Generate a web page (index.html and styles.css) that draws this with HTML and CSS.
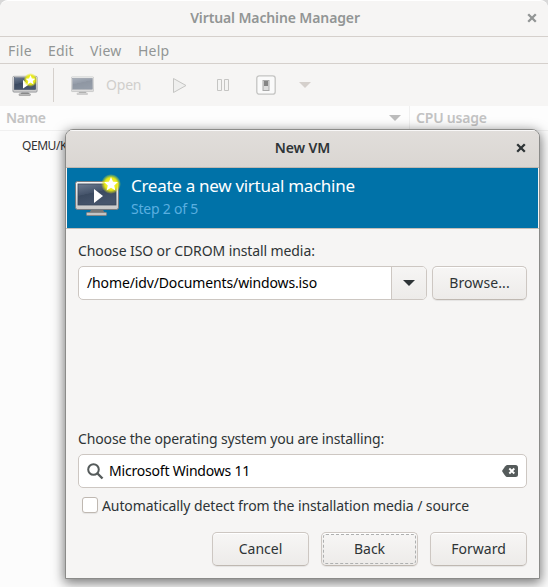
FILE: index.html
```html
<!DOCTYPE html>
<html lang="en">
<head>
<meta charset="utf-8">
<title>Virtual Machine Manager</title>
<link rel="stylesheet" href="styles.css">
</head>
<body>
<svg width="0" height="0" class="defs">
  <defs>
    <linearGradient id="screen" x1="0" y1="0" x2="0.4" y2="1"><stop offset="0" stop-color="#6d7b90"/><stop offset=".48" stop-color="#45546b"/><stop offset=".5" stop-color="#3b4a60"/><stop offset="1" stop-color="#46556c"/></linearGradient>
    <linearGradient id="bezel" x1="0" y1="0" x2="0" y2="1"><stop offset="0" stop-color="#f5f5f5"/><stop offset="1" stop-color="#c8c8c8"/></linearGradient>
    <radialGradient id="glow"><stop offset="0" stop-color="#fffd60"/><stop offset=".62" stop-color="#e8ea10"/><stop offset="1" stop-color="#e8ea10" stop-opacity="0"/></radialGradient>
    <symbol id="monitor" viewBox="0 0 46 42">
      <path d="M17 35h12l2 3H15z" fill="#777"/>
      <rect x="12.500" y="37.500" width="20" height="3" rx=".8" fill="#c4c4c4" stroke="#858585"/>
      <rect x="1.500" y="6.500" width="43" height="28" rx="2" fill="url(#bezel)" stroke="#777b80"/>
      <rect x="4" y="9" width="38" height="21" fill="url(#screen)" stroke="#39465a" stroke-width=".8"/>
    </symbol>
    <symbol id="star" viewBox="0 0 20 20">
      <circle cx="10" cy="10" r="10" fill="url(#glow)"/>
      <path d="M10 3l2 4.700 5 .4-3.800 3.300 1.200 5-4.400-2.700-4.400 2.700 1.200-5L3 8.100l5-.4z" fill="#fff"/>
    </symbol>
  </defs>
</svg>
<main class="window">
  <header class="titlebar"><span class="title">Virtual Machine Manager</span>
    <svg class="close" width="10" height="10" viewBox="0 0 10 10"><path d="M1.200 1.200l7.600 7.600M8.800 1.200L1.200 8.800"/></svg>
  </header>
  <nav class="menubar"><span class="m-file">File</span><span class="m-edit">Edit</span><span class="m-view">View</span><span>Help</span></nav>
  <div class="toolbar">
    <svg class="t-new" width="26" height="24" viewBox="0 0 26 24">
      <use href="#monitor" x="0" y="-1" width="26" height="25"/>
      <path d="M11 7l6 4.500-6 4z" fill="#fff"/>
      <use href="#star" x="11" y="0" width="15" height="14"/>
    </svg>
    <i class="sep"></i>
    <svg class="t-open" width="24" height="22" viewBox="0 0 24 22"><use href="#monitor" x="-.5" y="-1" width="24" height="23"/></svg>
    <span class="open">Open</span>
    <svg class="t-play" width="16" height="17" viewBox="0 0 16 17"><path d="M1.500 1.500v14L14 8.500z" fill="#efefee" stroke="#c5c5c3"/></svg>
    <svg class="t-pause" width="14" height="14" viewBox="0 0 14 14"><path d="M1.500 1.500h4v11h-4zM8.500 1.500h4v11h-4z" fill="#f4f4f3" stroke="#c5c5c3"/></svg>
    <svg class="t-power" width="20" height="20" viewBox="0 0 20 20"><rect x=".8" y=".8" width="18.400" height="18.400" rx="2.500" fill="#fafafa" stroke="#c4c4c2" stroke-width="1.300"/><rect x="7" y="5.500" width="6" height="10" fill="#ddd" stroke="#aaa"/><path d="M8 6h4v5H8z" fill="#858585"/></svg>
    <i class="tri t-tri"></i>
  </div>
  <div class="columns"><div class="c-name"><span class="name">Name</span><i class="tri"></i></div><div class="c-cpu"><span class="cpu">CPU usage</span></div></div>
  <div class="list"><span>QEMU/KVM</span></div>
</main>

<section class="dialog">
  <header class="d-title"><span class="newvm">New VM</span>
    <svg class="close" width="10" height="10" viewBox="0 0 10 10"><path d="M1.200 1.200l7.600 7.600M8.800 1.200L1.200 8.800"/></svg>
  </header>
  <div class="banner">
    <svg width="48" height="44" viewBox="0 0 48 44">
      <use href="#monitor" x="-1" y="0" width="46" height="42"/>
      <path d="M19 14v14l9-7z" fill="#fff"/>
      <use href="#star" x="26" y="-1" width="20" height="20"/>
    </svg>
    <div class="b-text"><div class="create">Create a new virtual machine</div><div class="step">Step 2 of 5</div></div>
  </div>
  <div class="body">
    <label class="l-media">Choose ISO or CDROM install media:</label>
    <div class="row">
      <div class="combo"><div class="value"><span class="path">/home/idv/Documents/windows.iso</span></div><div class="drop"><i class="tri"></i></div></div>
      <button class="btn browse"><span>Browse...</span></button>
    </div>
    <label class="l-os">Choose the operating system you are installing:</label>
    <div class="search">
      <svg width="16" height="16" viewBox="0 0 16 16" fill="none" stroke="#555b5b" stroke-width="2"><circle cx="6.500" cy="6.500" r="5.300"/><path d="M10.500 10.500l5 5" stroke-width="2.400"/></svg>
      <span class="os">Microsoft Windows 11</span>
      <svg width="16" height="12" viewBox="0 0 16 12"><path d="M5 0h8.500Q16 0 16 2.500v7Q16 12 13.500 12H5Q3.500 12 0 6 3.500 0 5 0z" fill="#555b5b"/><path d="M7.300 3.500l5 5M12.300 3.500l-5 5" stroke="#fff" stroke-width="1.900"/></svg>
    </div>
    <div class="check"><i></i><span class="auto">Automatically detect from the installation media / source</span></div>
    <div class="actions"><button class="btn cancel"><span>Cancel</span></button><button class="btn back"><span>Back</span></button><button class="btn forward"><span>Forward</span></button></div>
  </div>
</section>
</body>
</html>
```
FILE: styles.css
```css
* { box-sizing: border-box; }
body { margin: 0; width: 548px; height: 587px; overflow: hidden; background: #d8d8d8; font: 14px/20px "Noto Sans", sans-serif; color: #2e3436; white-space: nowrap; }
svg { display: block; flex: none; overflow: visible; }
.defs { position: absolute; }
.window { height: 587px; display: flex; flex-direction: column; background: #fcfcfc; border-radius: 8px 8px 0 0; overflow: hidden; border-top: 1px solid #fff; }
.titlebar { height: 36px; flex: none; display: grid; place-items: center; position: relative; padding: 0 0 2px 2px; background: #f6f5f4; border-bottom: 1px solid #d5d0cc; color: #929595; font-weight: 600; }
.title { letter-spacing: -.12px; }
.close { position: absolute; right: 11px; top: 12px; stroke: #929595; stroke-width: 2.300; }
.menubar { height: 27px; flex: none; display: flex; align-items: center; padding: 1px 0 0 8px; background: #f6f5f4; border-bottom: 1px solid #d5d0cc; color: #929595; letter-spacing: .2px; }
.m-file { width: 40px; letter-spacing: .4px; }
.m-edit { width: 42px; }
.m-view { width: 48px; }
.toolbar { height: 42px; flex: none; display: flex; align-items: center; padding-left: 12px; background: #f6f5f4; }
.sep { width: 1px; height: 34px; background: #d5d0cc; margin: 0 17px 0 15px; }
.t-open { opacity: .55; margin-right: 11px; }
.open { width: 66px; color: #d0cfcc; letter-spacing: -.2px; }
.t-play { margin-right: 28px; }
.t-pause { margin-right: 26px; }
.t-power { margin-right: 23px; }
.tri { width: 12px; height: 6px; background: currentColor; clip-path: polygon(0 0, 100% 0, 50% 100%); flex: none; }
.t-tri { color: #d5d0cc; }
.columns { height: 25px; flex: none; display: flex; color: #c3c3c3; font-weight: 600; border-bottom: 1px solid #f0f0f0; background: #fdfdfd; }
.c-name { width: 410px; display: flex; align-items: center; justify-content: space-between; padding: 0 8px 0 6px; border-right: 1px solid #f0f0f0; }
.name { letter-spacing: -.3px; }
.cpu { letter-spacing: -.2px; }
.c-name .tri { color: #bcbcbc; }
.c-cpu { padding: 2px 6px; }
.list { padding: 5px 22px; font-size: 12px; letter-spacing: -.45px; color: #333; }
.dialog { position: absolute; left: 65px; top: 129px; width: 475px; height: 450px; border: 1px solid #8b8b89; border-radius: 8px 8px 0 0; background: #f6f5f4; box-shadow: 0 3px 12px 1px rgba(0,0,0,.52); overflow: hidden; }
.d-title { height: 38px; display: grid; place-items: center; position: relative; padding-bottom: 2px; background: linear-gradient(#e1dedb, #dad6d2); border-bottom: 1px solid #bfb8b1; box-shadow: inset 0 1px #f9f8f8; font-weight: 600; }
.newvm { letter-spacing: -.1px; }
.d-title .close { right: 13px; top: 13px; stroke: #2e3436; }
.banner { height: 60px; margin: 0 1px; display: flex; background: #0072a8; color: #fff; padding: 7px 8px; }
.b-text { padding-left: 8px; }
.create { font-size: 17px; line-height: 22px; letter-spacing: -.29px; }
.step { color: #5aafe0; margin-top: 2px; letter-spacing: -.22px; }
.body { height: 350px; border-top: 1px solid #c4beb8; padding: 12px; display: flex; flex-direction: column; }
.l-media { letter-spacing: -.1px; }
.row { display: flex; gap: 5px; margin-top: 5px; }
.combo { width: 349px; height: 34px; display: flex; border: 1px solid #cdc7c2; border-radius: 5px; overflow: hidden; background: #fff; color: #000; }
.value { flex: 1; display: flex; align-items: center; padding-left: 8px; }
.path { letter-spacing: -.13px; }
.drop { width: 35px; display: grid; place-items: center; border-left: 1px solid #cdc7c2; background: linear-gradient(#f6f5f4, #edebe9); color: #2e3436; }
.btn { height: 34px; padding: 0; border: 1px solid #cdc7c2; border-bottom-color: #bfb8b1; border-radius: 5px; background: linear-gradient(#f7f6f5, #edebe9); box-shadow: 0 1px 1px rgba(0,0,0,.07), inset 0 1px #fff; font: inherit; color: inherit; }
.browse { width: 95px; letter-spacing: .1px; }
.l-os { margin-top: 129px; letter-spacing: -.14px; }
.search { height: 34px; margin-top: 5px; flex: none; display: flex; align-items: center; padding: 0 8px; border: 1px solid #cdc7c2; border-radius: 5px; background: #fff; color: #000; }
.os { flex: 1; padding-left: 6px; letter-spacing: -.2px; }
.check { display: flex; align-items: center; margin-top: 8px; padding-left: 4px; gap: 4px; }
.check i { width: 16px; height: 16px; margin-top: -2px; border: 1px solid #bfb8b1; border-radius: 3px; background: #fff; box-shadow: 0 1px 1px rgba(0,0,0,.07); }
.auto { letter-spacing: -.1px; }
.actions { display: flex; justify-content: flex-end; gap: 12px; margin-top: 16px; }
.actions .btn { width: 97px; }
.back { position: relative; }
.back::after { content: ""; position: absolute; inset: 1px; border: 1px dashed #aeb0b0; border-radius: 3px; }
```
